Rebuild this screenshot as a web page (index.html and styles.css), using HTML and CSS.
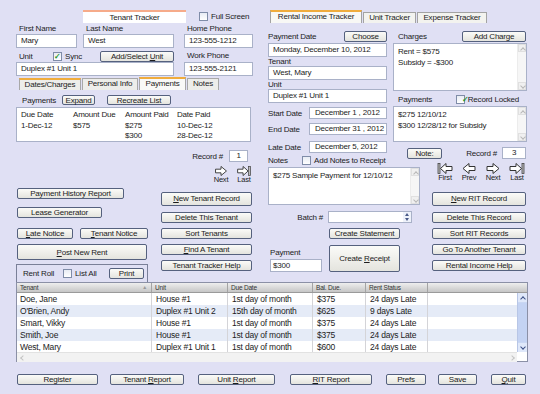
FILE: index.html
```html
<!DOCTYPE html>
<html lang="en">
<head>
    <meta charset="UTF-8">
    <title>Tenant Tracker</title>
    <link rel="stylesheet" href="styles.css">
</head>
<body>
<div class="window">
    <div class="upper">
        <!-- Левая половина: Tenant Tracker -->
        <div class="tenant-panel">
            <div class="title-row">
                <div class="form-tab">Tenant Tracker</div>
                <div class="check full-screen"><span class="box"></span>Full Screen</div>
            </div>

            <div class="name-row">
                <div class="field w-first"><div class="lbl">First Name</div><div class="input">Mary</div></div>
                <div class="field w-last"><div class="lbl">Last Name</div><div class="input">West</div></div>
                <div class="field w-phone"><div class="lbl">Home Phone</div><div class="input">123-555-1212</div></div>
            </div>

            <div class="unit-row">
                <div class="unit-field">
                    <div class="unit-head">
                        <span class="lbl unit-lbl">Unit</span>
                        <div class="check"><span class="box">&#10003;</span>Sync</div>
                        <button class="btn add-unit">Add/Select <u>U</u>nit</button>
                    </div>
                    <div class="input">Duplex #1 Unit 1</div>
                </div>
                <div class="field w-phone"><div class="lbl work-lbl">Work Phone</div><div class="input">123-555-2121</div></div>
            </div>

            <div class="sub-tabs">
                <div class="sub-tab hl t-dates">Dates/Charges</div>
                <div class="sub-tab t-personal">Personal Info</div>
                <div class="sub-tab hl active t-pay">Payments</div>
                <div class="sub-tab t-notes">Notes</div>
            </div>

            <div class="pay-head">
                <span class="pay-lbl">Payments</span>
                <button class="btn expand">Expand</button>
                <button class="btn recreate">Recreate List</button>
            </div>

            <div class="pay-list">
                <div class="pay-line"><span>Due Date</span><span>Amount Due</span><span>Amount Paid</span><span>Date Paid</span></div>
                <div class="pay-line"><span>1-Dec-12</span><span>$575</span><span>$275</span><span>10-Dec-12</span></div>
                <div class="pay-line"><span></span><span></span><span>$300</span><span>28-Dec-12</span></div>
            </div>

            <div class="record-row left-record">
                <span>Record #</span>
                <div class="input rec-input">1</div>
            </div>

            <div class="nav left-nav">
                <div class="nav-item">
                    <svg width="16" height="11" viewBox="0 0 16 11"><path d="M2 3.5h6v-3l6 5-6 5v-3H2z" fill="#fff" stroke="#333"/></svg>
                    <span>Next</span>
                </div>
                <div class="nav-item">
                    <svg width="16" height="11" viewBox="0 0 16 11"><path d="M1 3.5h6v-3l5.5 5-5.5 5v-3H1z" fill="#fff" stroke="#333"/><rect x="13" y="0.5" width="2" height="10" fill="#bbb" stroke="#444" stroke-width="0.8"/></svg>
                    <span>Last</span>
                </div>
            </div>

            <div class="lower">
                <div class="col-a">
                    <button class="btn phr">Payment History Report</button>
                    <button class="btn lease">Lease Generator</button>
                    <div class="notice-row">
                        <button class="btn late"><u>L</u>ate Notice</button>
                        <button class="btn tnotice"><u>T</u>enant Notice</button>
                    </div>
                    <button class="btn post"><u>P</u>ost New Rent</button>
                    <div class="rent-roll">
                        <span>Rent Roll</span>
                        <div class="check list-all"><span class="box"></span>List All</div>
                        <button class="btn print">Print</button>
                    </div>
                </div>
                <div class="col-b">
                    <button class="btn big new-tenant"><u>N</u>ew Tenant Record</button>
                    <button class="btn side first-side">Delete This Tenant</button>
                    <button class="btn side">Sort Tenants</button>
                    <button class="btn side"><u>F</u>ind A Tenant</button>
                    <button class="btn side">Tenant Tracker Help</button>
                </div>
            </div>
        </div>

        <!-- Правая половина: Rental Income Tracker -->
        <div class="rit-panel">
            <div class="main-tabs">
                <div class="main-tab active t-rit">Rental Income Tracker</div>
                <div class="main-tab t-unit">Unit Tracker</div>
                <div class="main-tab t-exp">Expense Tracker</div>
            </div>

            <div class="block-a">
                <div class="r1">
                    <div class="pd-row">
                        <span>Payment Date</span>
                        <button class="btn choose">Choose</button>
                    </div>
                    <div class="input pd-input">Monday, December 10, 2012</div>
                    <div class="small-lbl">Tenant</div>
                    <div class="input">West, Mary</div>
                    <div class="small-lbl">Unit</div>
                    <div class="input">Duplex #1 Unit 1</div>
                    <div class="date-row start"><span>Start Date</span><div class="input date">December 1 , 2012</div></div>
                    <div class="date-row end"><span>End Date</span><div class="input date">December 31 , 2012</div></div>
                    <div class="date-row late-d"><span>Late Date</span><div class="input date">December 5, 2012</div></div>
                    <div class="notes-row">
                        <span class="notes-lbl">Notes</span>
                        <div class="check"><span class="box"></span>Add Notes to Receipt</div>
                    </div>
                </div>
                <div class="r2">
                    <div class="charge-row">
                        <span>Charges</span>
                        <button class="btn add-charge">Add Charge</button>
                    </div>
                    <div class="memo charges">
                        <div class="memo-text">Rent = $575<br>Subsidy = -$300</div>
                        <div class="vscroll"><span class="up"></span><span class="down"></span></div>
                    </div>
                    <div class="rpay-row">
                        <span>Payments</span>
                        <div class="check locked"><span class="box">&#10003;</span>Record Locked</div>
                    </div>
                    <div class="memo rpay">
                        <div class="memo-text">$275 12/10/12<br>$300 12/28/12 for Subsidy</div>
                        <div class="vscroll"><span class="up"></span><span class="down"></span></div>
                    </div>
                    <div class="record-row right-record">
                        <button class="btn note">Note:</button>
                        <span class="rec-lbl">Record #</span>
                        <div class="input rec-input r3">3</div>
                    </div>
                </div>
            </div>

            <div class="block-b">
                <div class="memo notes">
                    <div class="memo-text">$275 Sample Payment for 12/10/12</div>
                    <div class="vscroll"><span class="up"></span><span class="down"></span></div>
                </div>
                <div class="b-right">
                    <div class="nav right-nav">
                        <div class="nav-item">
                            <svg width="16" height="11" viewBox="0 0 16 11"><rect x="1" y="0.5" width="2" height="10" fill="#bbb" stroke="#444" stroke-width="0.8"/><path d="M15 3.5H9v-3l-5.5 5 5.5 5v-3h6z" fill="#fff" stroke="#333"/></svg>
                            <span>First</span>
                        </div>
                        <div class="nav-item">
                            <svg width="16" height="11" viewBox="0 0 16 11"><path d="M14 3.5H8v-3l-6 5 6 5v-3h6z" fill="#fff" stroke="#333"/></svg>
                            <span>Prev</span>
                        </div>
                        <div class="nav-item">
                            <svg width="16" height="11" viewBox="0 0 16 11"><path d="M2 3.5h6v-3l6 5-6 5v-3H2z" fill="#fff" stroke="#333"/></svg>
                            <span>Next</span>
                        </div>
                        <div class="nav-item">
                            <svg width="16" height="11" viewBox="0 0 16 11"><path d="M1 3.5h6v-3l5.5 5-5.5 5v-3H1z" fill="#fff" stroke="#333"/><rect x="13" y="0.5" width="2" height="10" fill="#bbb" stroke="#444" stroke-width="0.8"/></svg>
                            <span>Last</span>
                        </div>
                    </div>
                    <button class="btn big new-rit"><u>N</u>ew RIT Record</button>
                </div>
            </div>

            <div class="block-c">
                <div class="c-left">
                    <div class="batch-row">
                        <span class="batch-lbl">Batch #</span>
                        <div class="input batch"><span class="spin"><i class="sup"></i><i class="sdown"></i></span></div>
                    </div>
                    <button class="btn statement">Create Statement</button>
                    <div class="receipt-row">
                        <div class="pay-col">
                            <div class="payment-lbl">Payment</div>
                            <div class="input payment">$300</div>
                        </div>
                        <button class="btn receipt">Create <u>R</u>eceipt</button>
                    </div>
                </div>
                <div class="c-right">
                    <button class="btn side first-side">Delete This Record</button>
                    <button class="btn side">Sort RIT Records</button>
                    <button class="btn side">Go To Another Tenant</button>
                    <button class="btn side">Rental Income Help</button>
                </div>
            </div>
        </div>
    </div>

    <!-- Таблица Rent Roll -->
    <div class="grid">
        <div class="grid-head">
            <div class="hc c1">Tenant<span class="sort">&#9650;</span></div>
            <div class="hc c2">Unit</div>
            <div class="hc c3">Due Date</div>
            <div class="hc c4">Bal. Due.</div>
            <div class="hc c5">Rent Status</div>
            <div class="hc c6"></div>
        </div>
        <div class="grid-body">
            <div class="rows">
                <div class="row"><div class="c1">Doe, Jane</div><div class="c2">House #1</div><div class="c3">1st day of month</div><div class="c4">$375</div><div class="c5">24 days Late</div><div class="c6"></div></div>
                <div class="row"><div class="c1">O'Brien, Andy</div><div class="c2">Duplex #1 Unit 2</div><div class="c3">15th day of month</div><div class="c4">$625</div><div class="c5">9 days Late</div><div class="c6"></div></div>
                <div class="row"><div class="c1">Smart, Vikky</div><div class="c2">House #1</div><div class="c3">1st day of month</div><div class="c4">$375</div><div class="c5">24 days Late</div><div class="c6"></div></div>
                <div class="row"><div class="c1">Smith, Joe</div><div class="c2">House #1</div><div class="c3">1st day of month</div><div class="c4">$375</div><div class="c5">24 days Late</div><div class="c6"></div></div>
                <div class="row"><div class="c1">West, Mary</div><div class="c2">Duplex #1 Unit 1</div><div class="c3">1st day of month</div><div class="c4">$600</div><div class="c5">24 days Late</div><div class="c6"></div></div>
            </div>
            <div class="grid-vscroll"><span class="gup"></span><span class="gthumb"></span><span class="gdown"></span></div>
        </div>
        <div class="grid-hscroll"><span class="hleft"></span><span class="hright"></span></div>
    </div>

    <div class="footer">
        <button class="btn f-register">Register</button>
        <button class="btn f-treport">Tenant <u>R</u>eport</button>
        <button class="btn f-ureport">Unit <u>R</u>eport</button>
        <button class="btn f-rit"><u>R</u>IT Report</button>
        <button class="btn f-prefs">Prefs</button>
        <button class="btn f-save">Save</button>
        <button class="btn f-quit"><u>Q</u>uit</button>
    </div>
</div>
</body>
</html>
```

FILE: styles.css
```css
/* Базовые настройки */
* {
    box-sizing: border-box;
}

body {
    margin: 0;
    background: #e0e0f4;
    font-family: "Liberation Sans", Arial, sans-serif;
    font-size: 8px;
    letter-spacing: -0.2px;
    white-space: nowrap;
    color: #1c1c1c;
}

.window {
    width: 540px;
    height: 394px;
    overflow: hidden;
    background: #e0e0f4;
}

.upper {
    display: flex;
    height: 282px;
}

/* Общие элементы формы */
.input {
    height: 14px;
    background: #fff;
    border: 1px solid #a9b1c8;
    padding: 0 4px;
    line-height: 12px;
    overflow: hidden;
}

.btn {
    display: block;
    font: inherit;
    letter-spacing: inherit;
    color: #1c1c1c;
    height: 11px;
    padding: 0;
    line-height: 9px;
    text-align: center;
    background: linear-gradient(#fbfbf8, #e4e4de);
    border: 1px solid #55617e;
    border-radius: 2px;
}

.check {
    display: flex;
    align-items: center;
}

.box {
    width: 9px;
    height: 9px;
    margin-right: 3px;
    border: 1px solid #7f8ca8;
    background: linear-gradient(#e8ecf4, #fff);
    color: #26962a;
    font-size: 8px;
    font-weight: bold;
    line-height: 7px;
    text-align: center;
}

/* Левая панель */
.tenant-panel {
    width: 265px;
    padding-left: 16px;
}

.title-row {
    display: flex;
    align-items: center;
    margin-top: 10px;
    height: 13px;
}

.form-tab {
    margin-left: 67px;
    width: 103px;
    height: 13px;
    background: #fff;
    border-top: 2px solid #f6ab8a;
    line-height: 11px;
    text-align: center;
}

.full-screen {
    margin-left: 13px;
}

.name-row {
    display: flex;
    height: 25px;
}

.lbl {
    line-height: 11px;
    padding-left: 3px;
}

.w-first { width: 61px; margin-right: 6px; }
.w-last { width: 91px; margin-right: 10px; }
.w-phone { width: 69px; }

.unit-row {
    display: flex;
    height: 28px;
}

.unit-field {
    width: 158px;
    margin-right: 10px;
}

.unit-head {
    display: flex;
    align-items: center;
    height: 14px;
    padding-top: 2px;
}

.unit-lbl {
    width: 37px;
}

.add-unit {
    margin-left: auto;
    width: 74px;
}

.work-lbl {
    height: 14px;
    padding-top: 2px;
    line-height: 12px;
}

.sub-tabs {
    display: flex;
    align-items: flex-end;
    margin: 1px 0 0 3px;
    height: 13px;
}

.sub-tab {
    height: 12px;
    margin-right: 1px;
    border: 1px solid #a8a8a8;
    border-bottom: none;
    background: #ededea;
    line-height: 10px;
    text-align: center;
}

.sub-tab.hl { border-top: 2px solid #f0ac3c; }
.sub-tab.active { height: 13px; background: #f9f9f7; }
.t-dates { width: 62px; }
.t-personal { width: 56px; }
.t-pay { width: 47px; }
.t-notes { width: 32px; }

.pay-head {
    display: flex;
    align-items: center;
    margin-top: 5px;
    height: 10px;
}

.pay-lbl {
    width: 46px;
    padding-left: 6px;
}

.expand { width: 33px; height: 10px !important; }
.recreate { width: 64px; height: 10px !important; margin-left: 12px; }

.pay-list {
    margin-top: 2px;
    width: 235px;
    height: 35px;
    background: #fff;
    border: 1px solid #a9b1c8;
    padding: 2px 0 0 4px;
}

.pay-line {
    display: grid;
    grid-template-columns: 52px 52px 52px 1fr;
    line-height: 10.5px;
}

.record-row {
    display: flex;
    align-items: center;
    justify-content: flex-end;
    height: 12px;
}

.left-record {
    margin: 8px 17px 0 0;
}

.rec-input {
    width: 19px;
    height: 12px;
    margin-left: 6px;
    padding: 0;
    line-height: 10px;
    text-align: center;
}

.nav {
    display: flex;
}

.left-nav {
    justify-content: flex-end;
    margin: 4px 13px 0 0;
    gap: 7px;
    height: 17px;
}

.nav-item {
    width: 16px;
    display: flex;
    flex-direction: column;
    align-items: center;
    font-size: 7.5px;
    line-height: 7px;
}

.nav-item svg {
    display: block;
}

.lower {
    display: flex;
}

.col-a {
    width: 134px;
}

.col-a .btn {
    margin-left: 1px;
}

.phr { margin-top: 5px; width: 107px; }
.lease { margin-top: 8px; width: 85px; }

.notice-row {
    display: flex;
    margin-top: 10px;
}

.late { width: 56px; }
.col-a .tnotice { width: 68px; margin-left: 7px; }

.post {
    margin-top: 5px;
    width: 130px;
    height: 16px !important;
}

.rent-roll {
    display: flex;
    align-items: center;
    margin-top: 4px;
    width: 132px;
    height: 18px;
    padding-left: 6px;
    border: 1px solid #7a8098;
    border-bottom: none;
}

.list-all { margin-left: 9px; }
.col-a .print { width: 35px; margin-left: auto; margin-right: 3px; }

.col-b {
    width: 91px;
    margin-left: 11px;
}

.big {
    height: 14px !important;
    line-height: 12px !important;
}

.new-tenant { margin-top: 9px; width: 91px; }

.side {
    width: 91px;
    margin-top: 5px;
}

.side.first-side { margin-top: 6px; }

/* Правая панель */
.rit-panel {
    width: 275px;
    padding-left: 3px;
}

.main-tabs {
    display: flex;
    align-items: flex-end;
    margin: 10px 0 0 2px;
    height: 13px;
}

.main-tab {
    height: 11px;
    margin-right: 1px;
    border: 1px solid #a3a3a3;
    border-bottom: none;
    background: #f3f3ef;
    line-height: 9px;
    text-align: center;
}

.main-tab.active {
    height: 13px;
    border-top: 2px solid #f0ac3c;
    background: #f8f8f5;
}

.t-rit { width: 92px; }
.t-unit { width: 53px; }
.t-exp { width: 70px; }

.block-a {
    display: flex;
    margin-top: 8px;
    height: 135px;
}

.r1 {
    width: 119px;
}

.pd-row, .charge-row {
    display: flex;
    align-items: center;
    justify-content: space-between;
    height: 11px;
}

.choose { width: 43px; }
.pd-input { margin-top: 1px; }

.small-lbl {
    height: 9px;
    line-height: 9px;
}

.date-row {
    display: flex;
    align-items: center;
    justify-content: space-between;
    height: 12px;
}

.date-row.start { margin-top: 4px; }
.date-row.end { margin-top: 4px; }
.date-row.late-d { margin-top: 6px; }

.date {
    width: 78px;
    height: 12px;
    line-height: 10px;
    padding-left: 5px;
}

.notes-row {
    display: flex;
    align-items: center;
    margin-top: 2px;
    height: 11px;
}

.notes-lbl { width: 34px; }

.r2 {
    width: 134px;
    margin-left: 6px;
}

.charge-row span,
.rpay-row span {
    padding-left: 5px;
}

.add-charge { width: 64px; margin-right: 1px; }

.memo {
    display: flex;
    background: #fff;
    border: 1px solid #a9b1c8;
}

.memo-text {
    flex: 1;
    padding: 3px 0 0 4px;
    line-height: 10.5px;
    overflow: hidden;
}

.vscroll {
    width: 9px;
    display: flex;
    flex-direction: column;
    justify-content: space-between;
    background: #f6f6f6;
    border-left: 1px solid #ececec;
}

.vscroll span {
    height: 8px;
    background: #f0f0f0;
    border: 1px solid #e0e0e0;
    position: relative;
}

.vscroll .up::after,
.vscroll .down::after {
    content: "";
    position: absolute;
    left: 1.5px;
    width: 3px;
    height: 3px;
    border-left: 1px solid #b8b8b8;
    border-top: 1px solid #b8b8b8;
}

.vscroll .up::after { top: 2.5px; transform: rotate(45deg); }
.vscroll .down::after { top: 0.5px; transform: rotate(-135deg); }

.charges {
    margin-top: 1px;
    height: 48px;
}

.rpay-row {
    display: flex;
    align-items: center;
    margin-top: 4px;
    height: 9px;
}

.locked { margin-left: auto; margin-right: 8px; }

.rpay {
    margin-top: 2px;
    height: 36px;
}

.right-record {
    justify-content: flex-start;
    margin-top: 5px;
}

.note { width: 35px; margin-left: 14px; }
.rec-lbl { margin-left: auto; }
.r3 { width: 24px; margin-left: 5px; margin-right: 1px; }

.block-b {
    display: flex;
    height: 40px;
}

.notes {
    margin-top: 1px;
    width: 152px;
    height: 38px;
}

.b-right {
    width: 95px;
    margin-left: 12px;
}

.right-nav {
    margin-top: -3px;
    padding-left: 5px;
    gap: 8px;
    height: 20px;
}

.new-rit { margin-top: 9px; width: 94px; }

.block-c {
    display: flex;
}

.c-left {
    width: 152px;
}

.batch-row {
    display: flex;
    align-items: center;
    margin-top: 5px;
    height: 12px;
}

.batch-lbl {
    width: 60px;
    padding-right: 5px;
    text-align: right;
}

.batch {
    width: 84px;
    height: 12px;
    padding: 0;
    display: flex;
    justify-content: flex-end;
}

.spin {
    width: 8px;
    display: flex;
    flex-direction: column;
    justify-content: space-around;
    align-items: center;
    background: #eef2fa;
}

.spin i {
    width: 0;
    height: 0;
    border-left: 2px solid transparent;
    border-right: 2px solid transparent;
}

.spin .sup { border-bottom: 3px solid #4a5a88; }
.spin .sdown { border-top: 3px solid #4a5a88; }

.statement {
    margin: 5px 0 0 61px;
    width: 71px;
}

.receipt-row {
    display: flex;
    margin-top: 6px;
    height: 27px;
}

.pay-col {
    width: 54px;
}

.payment-lbl {
    height: 14px;
    padding: 2px 0 0 2px;
    line-height: 12px;
}

.payment {
    width: 52px;
    height: 13px;
    margin-left: 2px;
    line-height: 11px;
    padding-left: 2px;
}

.receipt {
    width: 71px;
    height: 27px !important;
    margin-left: 7px;
}

.c-right {
    width: 94px;
    margin-left: 12px;
}

.c-right .side { width: 94px; }

/* Таблица */
.grid {
    margin-left: 16px;
    width: 512px;
    height: 80px;
    border: 1px solid #8b90a6;
    background: #fff;
}

.grid-head {
    display: flex;
    height: 10px;
    background: linear-gradient(#eeeeee, #c6c6c6);
    border-bottom: 1px solid #9a9a9a;
    font-size: 6.5px;
    line-height: 9px;
}

.hc {
    padding-left: 3px;
    border-right: 1px solid #a4a4a4;
    color: #333;
}

.sort {
    float: right;
    margin-right: 4px;
    font-size: 5px;
    color: #999;
}

.c1 { width: 135px; }
.c2 { width: 76px; }
.c3 { width: 85px; }
.c4 { width: 53px; }
.c5 { width: 62px; }
.c6 { flex: 1; border-right: none; }

.grid-body {
    display: flex;
    height: 59px;
}

.rows {
    width: 500px;
    overflow: hidden;
}

.row {
    display: flex;
    height: 12px;
    line-height: 12px;
    font-size: 8.5px;
}

.row:nth-child(even) {
    background: #e5ebf7;
}

.row div {
    padding-left: 4px;
    border-right: 1px solid #d4d4d8;
    overflow: hidden;
}

.row .c1 { padding-left: 3px; }
.row .c6 { border-right: none; }

.grid-vscroll {
    width: 10px;
    display: flex;
    flex-direction: column;
    background: #c9d7f3;
    border-left: 1px solid #b8c6e6;
}

.grid-vscroll span {
    position: relative;
}

.gup, .gdown {
    height: 9px;
    background: #dfe8fa;
}

.gthumb {
    flex: 1;
    margin: 1px 0;
    background: #c4d3f3;
}

.gup::after,
.gdown::after {
    content: "";
    position: absolute;
    left: 3px;
    width: 3px;
    height: 3px;
    border-left: 1px solid #3b4f86;
    border-top: 1px solid #3b4f86;
}

.gup::after { top: 3.5px; transform: rotate(45deg); }
.gdown::after { top: 1.5px; transform: rotate(-135deg); }

.grid-hscroll {
    display: flex;
    justify-content: space-between;
    height: 10px;
    margin-right: 10px;
    background: #f2f2f2;
    border-top: 1px solid #e2e2e2;
}

.grid-hscroll span {
    width: 9px;
    position: relative;
}

.grid-hscroll span::after {
    content: "";
    position: absolute;
    top: 3px;
    width: 3px;
    height: 3px;
    border-left: 1px solid #c4c4c4;
    border-top: 1px solid #c4c4c4;
}

.hleft::after { left: 4px; transform: rotate(-45deg); }
.hright::after { left: 2px; transform: rotate(135deg); }

/* Нижняя строка кнопок */
.footer {
    display: flex;
    margin-top: 12px;
}

.f-register { margin-left: 17px; width: 81px; }
.f-treport { margin-left: 12px; width: 74px; }
.f-ureport { margin-left: 14px; width: 77px; }
.f-rit { margin-left: 15px; width: 82px; }
.f-prefs { margin-left: 14px; width: 40px; }
.f-save { margin-left: 12px; width: 39px; }
.f-quit { margin-left: 14px; width: 35px; }
```
